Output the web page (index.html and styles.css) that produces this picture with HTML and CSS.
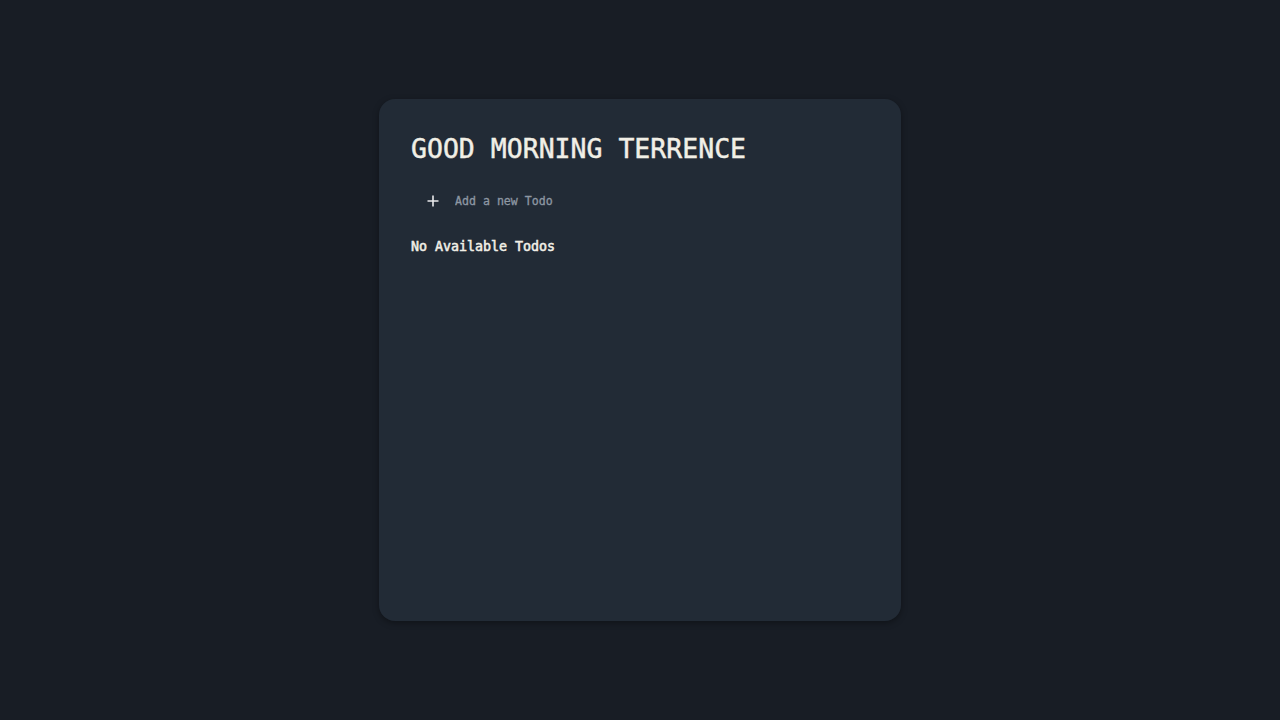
FILE: index.html
```html
<!DOCTYPE html>
<html>
<head>
<meta charset="utf-8">
<link rel="stylesheet" href="styles.css">
</head>
<body>
<main class="page">
  <section class="card">
    <h1 class="title">GOOD MORNING TERRENCE</h1>
    <form class="add-row">
      <span class="plus" aria-hidden="true">
        <svg width="12" height="12" viewBox="0 0 12 12"><path d="M6 0.5v11M0.5 6h11" stroke="#e9e9ec" stroke-width="1.6" fill="none"/></svg>
      </span>
      <input class="add-input" type="text" placeholder="Add a new Todo">
    </form>
    <p class="empty">No Available Todos</p>
  </section>
</main>
</body>
</html>
```

FILE: styles.css
```css
html, body {
  margin: 0;
  padding: 0;
  background: #181d25;
  height: 100%;
}
body {
  font-family: "DejaVu Sans Mono", monospace;
}
.page {
  display: flex;
  justify-content: center;
  padding-top: 99px;
}
.card {
  box-sizing: border-box;
  width: 522px;
  height: 522px;
  background: #222b36;
  border-radius: 16px;
  box-shadow: 0 2px 6px rgba(0, 0, 0, 0.35);
  padding: 33px 32px;
}
.title {
  margin: 0;
  font-size: 26.5px;
  font-weight: normal;
  line-height: 34px;
  color: #f1efe6;
  -webkit-text-stroke: 0.45px #f1efe6;
}
.add-row {
  display: flex;
  align-items: center;
  margin: 17px 0 0 16px;
  height: 36px;
}
.plus {
  display: flex;
  width: 12px;
  height: 12px;
  margin-left: 0;
}
.add-input {
  margin-left: 16px;
  background: transparent;
  border: none;
  outline: none;
  padding: 0;
  font-family: "DejaVu Sans Mono", monospace;
  font-size: 11.6px;
  color: #f1efe6;
  width: 380px;
  -webkit-text-stroke: 0.3px #8d97a3;
}
.add-input::placeholder {
  color: #8d97a3;
}
.empty {
  margin: 19px 0 0;
  font-size: 13.3px;
  font-weight: normal;
  color: #f1efe6;
  line-height: 18px;
  -webkit-text-stroke: 0.55px #f1efe6;
}
```
